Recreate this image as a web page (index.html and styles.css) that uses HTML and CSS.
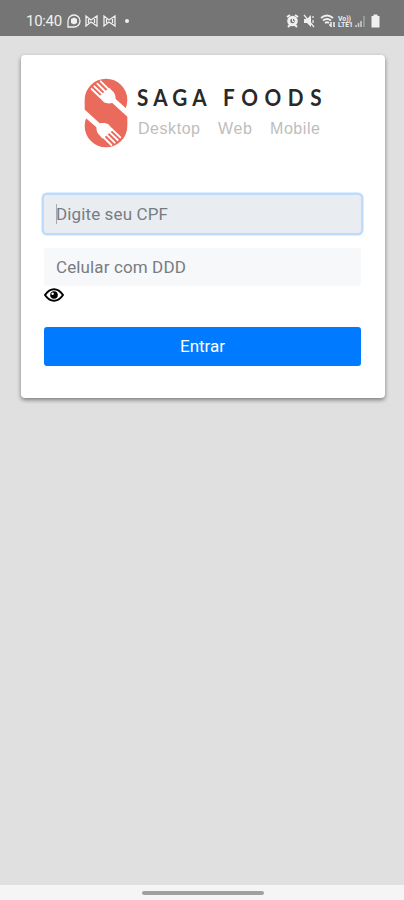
FILE: index.html
```
<!DOCTYPE html>
<html lang="pt-BR">
<head>
<meta charset="utf-8">
<title>Saga Foods</title>
<link rel="stylesheet" href="styles.css">
</head>
<body>
<header class="status">
  <span class="time">10:40</span>
  <svg class="notes" width="66" height="16" viewBox="0 0 66 16" fill="none" stroke="currentColor" stroke-width="1.3">
    <path d="M1 14V8a6 6 0 1 1 6 6z"/>
    <path d="M7 4.500l3 1.500v4L7 11.500 4 10V6z" fill="currentColor" stroke="none"/>
    <path d="M19 3v10l5-4 6 4V3l-6 4zM21.500 6v4M27.500 6v4"/>
    <path d="M37 3v10l5-4 6 4V3l-6 4zM39.500 6v4M45.500 6v4"/>
    <circle cx="60" cy="8" r="2" fill="currentColor" stroke="none"/>
  </svg>
  <svg class="system" width="96" height="16" viewBox="0 0 96 16" fill="none" stroke="currentColor">
    <path d="M1 4l3-2M12 4L9 2M2 14l2-2M11 14l-2-2" stroke-width="2"/>
    <circle cx="6.500" cy="8" r="3.800" stroke-width="3"/>
    <path d="M6.500 6v2.500H8"/>
    <path d="M18 6h3l4-4v12l-4-4h-3z" fill="currentColor" stroke="none"/>
    <path d="M18 2l10 12M27 3v2M27 7v3" stroke-width="1.200"/>
    <path d="M35 5q6-5 12 0M37 7.500q4-3 8 0M39 10q2-1.500 4 0" stroke-width="1.800"/>
    <path d="M43 12h2M45 9v5M48 9v5" stroke-width="1.500"/>
    <text x="52" y="7.500" textLength="13" lengthAdjust="spacingAndGlyphs">Vo))</text>
    <text x="52" y="14" textLength="15" lengthAdjust="spacingAndGlyphs">LTE1</text>
    <path d="M70 14v-2M72.500 14v-4M75 14V8" stroke-width="1.600" opacity=".7"/>
    <path d="M78 14V3" stroke-width="1.600" opacity=".35"/>
    <path d="M85.500 3h2V1.500h4V3h2v11.500h-8z" fill="currentColor" stroke="none"/>
  </svg>
</header>
<main>
  <form class="card">
    <svg class="logo" viewBox="75 70 255 85" width="255" height="85">
      <g transform="translate(75 70) scale(.33333)">
        <path fill="#ea6a5b" d="M29 90a64 64 0 0 1 128 0q0 16-7 31l7 19v28a64 64 0 0 1-128 0q0-16 7-30l-7-20z"/>
        <g id="fork" fill="#fff">
          <path d="M71 80l32-27 13 14c5 6 5 12 6 20l36 32v22l-46-42c-9 2-18 2-26-3z"/>
          <path d="M50 57l25 24M58 49l26 25M67 41l25 25M77 34l24 24" fill="none" stroke="#fff" stroke-width="5.500" stroke-linecap="round"/>
        </g>
        <use href="#fork" transform="rotate(180 93 129.500)"/>
      </g>
      <text class="brand" transform="translate(137 106) scale(.9 1)" textLength="77.500">SAGA</text>
      <text class="brand" transform="translate(223 106) scale(.9 1)" textLength="109.500">FOODS</text>
      <text class="sub" x="138" y="134" textLength="62">Desktop</text>
      <text class="sub" x="218" y="134" textLength="34">Web</text>
      <text class="sub" x="270" y="134" textLength="50">Mobile</text>
    </svg>
    <div class="field focused"><i class="caret"></i>Digite seu CPF</div>
    <div class="field">Celular com DDD</div>
    <svg class="eye" width="20" height="14" viewBox="0 0 20 14">
      <path d="M1 7Q5 1.200 10 1.200T19 7Q15 12.800 10 12.800T1 7z" fill="#fff" stroke="#000" stroke-width="2"/>
      <circle cx="10" cy="7" r="3.800"/>
      <circle cx="8.600" cy="5.700" r="1.200" fill="#fff"/>
    </svg>
    <button class="submit" type="button">Entrar</button>
  </form>
</main>
<footer><div class="handle"></div></footer>
</body>
</html>
```
FILE: styles.css
```
* { box-sizing: border-box; }
body {
  margin: 0;
  height: 900px;
  display: flex;
  flex-direction: column;
  background: #e0e0e0;
  font-family: Roboto, sans-serif;
  overflow: hidden;
}
.status {
  height: 36px;
  flex: none;
  padding: 5px 22px 0 26px;
  display: flex;
  align-items: center;
  background: #757575;
  color: #f0f0f0;
}
.time { width: 41px; font-size: 15px; letter-spacing: -.3px; }
.system { margin-left: auto; }
.system text { font: 700 7px Roboto, sans-serif; fill: currentColor; stroke: none; }
main { flex: 1; padding: 19px 19px 0 21px; }
.card {
  width: 364px;
  height: 343px;
  padding: 15px 24px 0 23px;
  display: flex;
  flex-direction: column;
  background: #fff;
  border-radius: 4px;
  box-shadow: 0 2px 4px rgba(0, 0, 0, .45);
}
.logo { display: block; flex: none; margin: 0 0 40px 31px; }
.brand { font: 700 23px Lato, sans-serif; fill: #292929; }
.sub { font: 16px "Liberation Sans", sans-serif; fill: #bdbdbd; }
.field {
  flex: none;
  height: 38px;
  margin-bottom: 15px;
  padding-left: 12px;
  display: flex;
  align-items: center;
  background: #f7f8fa;
  border-radius: 3px;
  color: #777c81;
  font-size: 17px;
  letter-spacing: .12px;
}
.focused { background: #e9edf1; box-shadow: 0 0 0 2.5px #bddcfc; }
.field + .field { margin-bottom: 2px; }
.caret { width: 1px; height: 20px; margin-right: -1px; background: #aaa; }
.eye { flex: none; margin-bottom: 25px; }
.submit {
  flex: none;
  height: 39px;
  padding: 0 0 2px;
  border: 0;
  border-radius: 3px;
  background: #007bff;
  color: #fff;
  font: 17px Roboto, sans-serif;
}
footer {
  flex: none;
  height: 15px;
  padding-top: 6px;
  background: #f5f5f5;
}
.handle { width: 122px; height: 4px; margin-left: 142px; border-radius: 2px; background: #a0a0a0; }
```
